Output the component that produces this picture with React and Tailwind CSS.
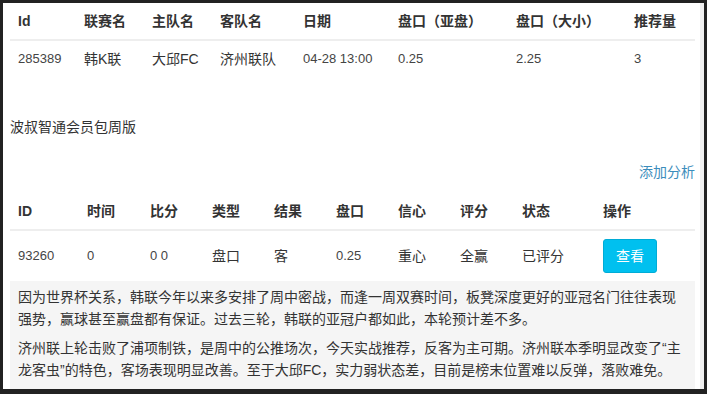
const font = { fontFamily: '"Liberation Sans", "Noto Sans CJK SC", sans-serif' };

const cols1 = [
  ["Id", "w-[66px]"],
  ["联赛名", "w-[68px]"],
  ["主队名", "w-[68px]"],
  ["客队名", "w-[83px]"],
  ["日期", "w-[95px]"],
  ["盘口（亚盘）", "w-[118px]"],
  ["盘口（大小）", "w-[118px]"],
  ["推荐量", "w-[69px]"],
];

const cols2 = [
  ["ID", "w-[69px]"],
  ["时间", "w-[63px]"],
  ["比分", "w-[62px]"],
  ["类型", "w-[62px]"],
  ["结果", "w-[62px]"],
  ["盘口", "w-[62px]"],
  ["信心", "w-[62px]"],
  ["评分", "w-[62px]"],
  ["状态", "w-[81px]"],
  ["操作", "w-[100px]"],
];

function Head({ cols }) {
  return (
    <thead>
      <tr className="border-b-2 border-[#eeeeee]">
        {cols.map(([label, w]) => (
          <th key={label} className={`${w} p-2 text-left font-bold text-[14px] leading-[20px] text-[#333]`}>
            {label}
          </th>
        ))}
      </tr>
    </thead>
  );
}

function Cell({ num, children }) {
  return (
    <td className={`p-2 align-middle leading-[20px] text-[#333] ${num ? "text-[13px] text-[#444]" : "text-[14px]"}`}>
      {children}
    </td>
  );
}

export default function App() {
  return (
    <div className="w-[707px] h-[394px] bg-[#222] pt-[3px] pl-[3px] pr-[3px] pb-[5px] overflow-hidden" style={font}>
      <div className="flex h-full">
        <div className="flex-1 bg-white pl-[7px] pr-[5px] overflow-hidden">
          <table className="w-full table-fixed border-collapse">
            <Head cols={cols1} />
            <tbody>
              <tr>
                <Cell num>285389</Cell>
                <Cell>韩K联</Cell>
                <Cell>大邱FC</Cell>
                <Cell>济州联队</Cell>
                <Cell num>04-28 13:00</Cell>
                <Cell num>0.25</Cell>
                <Cell num>2.25</Cell>
                <Cell num>3</Cell>
              </tr>
            </tbody>
          </table>

          <div className="mt-[40px] text-[14px] leading-[20px] text-[#333]">波叔智通会员包周版</div>
          <div className="mt-[25px] text-right text-[14px] leading-[20px] text-[#3c8dbc]">添加分析</div>

          <table className="mt-[11px] w-full table-fixed border-collapse">
            <Head cols={cols2} />
            <tbody>
              <tr>
                <Cell num>93260</Cell>
                <Cell num>0</Cell>
                <Cell num>0 0</Cell>
                <Cell>盘口</Cell>
                <Cell>客</Cell>
                <Cell num>0.25</Cell>
                <Cell>重心</Cell>
                <Cell>全赢</Cell>
                <Cell>已评分</Cell>
                <td className="p-2 align-middle">
                  <button className="bg-[#00c0ef] border border-[#00acd6] rounded-[3px] text-white text-[14px] leading-[20px] px-[12px] py-[6px]">
                    查看
                  </button>
                </td>
              </tr>
            </tbody>
          </table>

          <div className="bg-[#f5f5f5] pl-2 pr-2 pt-[5px] pb-3 text-[14px] leading-[22px] text-[#333]">
            <p className="mb-[7px]">
              因为世界杯关系，韩联今年以来多安排了周中密战，而逢一周双赛时间，板凳深度更好的亚冠名门往往表现强势，赢球甚至赢盘都有保证。过去三轮，韩联的亚冠户都如此，本轮预计差不多。
            </p>
            <p className="mb-[7px]">
              济州联上轮击败了浦项制铁，是周中的公推场次，今天实战推荐，反客为主可期。济州联本季明显改变了“主龙客虫”的特色，客场表现明显改善。至于大邱FC，实力弱状态差，目前是榜末位置难以反弹，落败难免。
            </p>
          </div>
        </div>
        <div className="w-[4px] bg-[#f0f0f0]" />
      </div>
    </div>
  );
}
